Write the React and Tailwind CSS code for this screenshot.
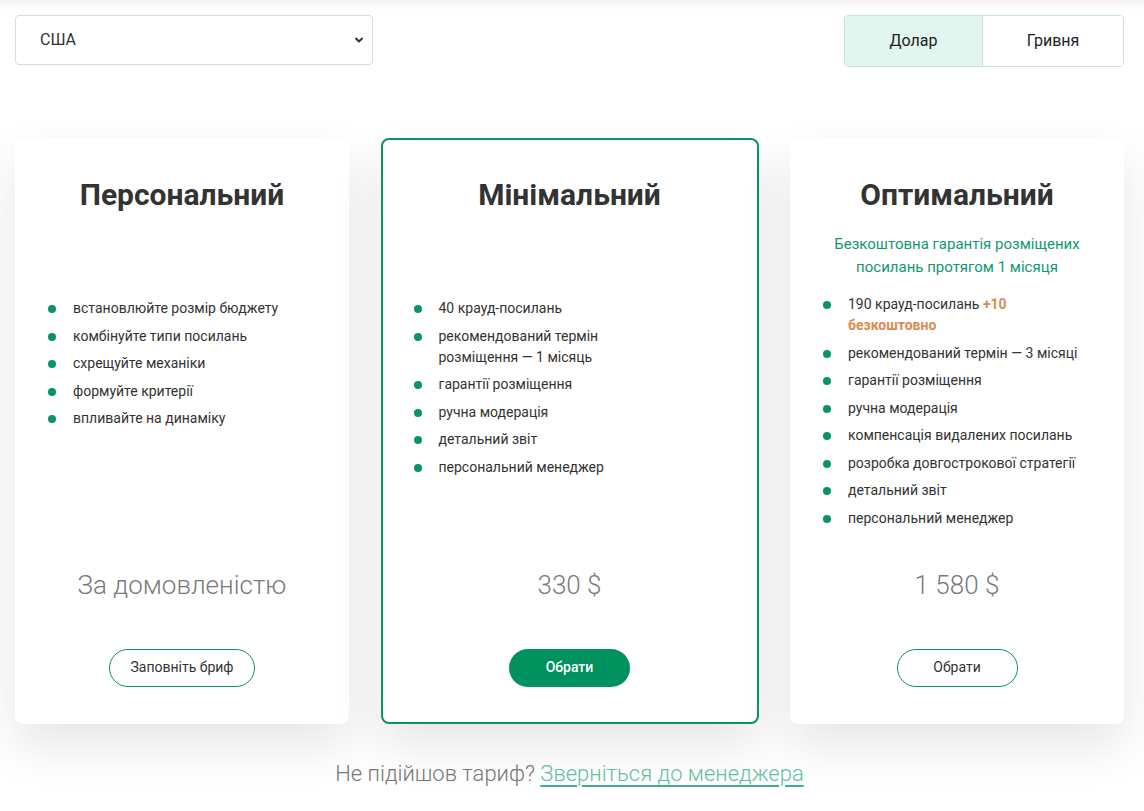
import { ChevronDown } from 'lucide-react';

const plans = [
  {
    title: 'Персональний',
    features: [
      'встановлюйте розмір бюджету',
      'комбінуйте типи посилань',
      'схрещуйте механіки',
      'формуйте критерії',
      'впливайте на динаміку',
    ],
    price: 'За домовленістю',
    action: 'Заповніть бриф',
  },
  {
    title: 'Мінімальний',
    featured: true,
    features: [
      '40 крауд-посилань',
      'рекомендований термін розміщення — 1 місяць',
      'гарантії розміщення',
      'ручна модерація',
      'детальний звіт',
      'персональний менеджер',
    ],
    price: '330 $',
    action: 'Обрати',
  },
  {
    title: 'Оптимальний',
    note: 'Безкоштовна гарантія розміщених посилань протягом 1 місяця',
    features: [
      <>
        190 крауд-посилань <span className="font-bold text-[#dc8a4f]">+10</span>{' '}
        <span className="font-bold text-[#dc8a4f]">безкоштовно</span>
      </>,
      'рекомендований термін — 3 місяці',
      'гарантії розміщення',
      'ручна модерація',
      'компенсація видалених посилань',
      'розробка довгострокової стратегії',
      'детальний звіт',
      'персональний менеджер',
    ],
    price: '1 580 $',
    action: 'Обрати',
  },
];

function PlanCard({ plan }) {
  return (
    <div
      className={`flex flex-col rounded-lg bg-white shadow-[0_22px_50px_rgba(0,0,0,0.1)] ${
        plan.featured
          ? 'border-2 border-[#0a9461] pt-[37px] pb-[35px]'
          : 'pt-[39px] pb-[37px]'
      }`}
    >
      <div className={plan.note ? 'mb-[15.5px]' : 'h-[121px]'}>
        <h2 className="text-center text-[30px] leading-[36px] font-bold text-[#333]">
          {plan.title}
        </h2>
        {plan.note && (
          <p className="mx-auto mt-[19.5px] max-w-[280px] text-center text-[15px] leading-[23px] text-[#12986f]">
            {plan.note}
          </p>
        )}
      </div>

      <div className="flex-1">
        <ul
          className={`flex max-w-[258px] flex-col gap-[6.5px] ${
            plan.featured ? 'ml-[31px]' : 'ml-[33px]'
          }`}
        >
          {plan.features.map((feature, i) => (
            <li key={i} className="flex items-start text-[14px] leading-[21px] text-[#333]">
              <span className="mt-[7px] mr-[17px] h-[8px] w-[8px] shrink-0 rounded-full bg-[#0a9461]" />
              <span>{feature}</span>
            </li>
          ))}
        </ul>
      </div>

      <p className="mt-[40px] text-center text-[26px] leading-[32px] font-light text-[#7a7a7a]">
        {plan.price}
      </p>

      <div className="mt-[48px] flex justify-center">
        {plan.featured ? (
          <button className="h-[38px] w-[121px] rounded-full bg-[#00925e] text-[14px] font-medium text-white">
            {plan.action}
          </button>
        ) : (
          <button className="h-[38px] min-w-[121px] rounded-full border border-[#0a9461] px-[20px] text-[14px] text-[#333]">
            {plan.action}
          </button>
        )}
      </div>
    </div>
  );
}

export default function App() {
  return (
    <div
      className="min-h-[811px] bg-white pl-[15px] pr-[20px] pt-[15px] shadow-[inset_0_10px_12px_-8px_rgba(0,0,0,0.07)]"
      style={{ fontFamily: 'Roboto, "Noto Sans", sans-serif' }}
    >
      <div className="flex items-start justify-between">
        <div className="relative w-[358px]">
          <select className="h-[50px] w-full appearance-none rounded border border-[#dadada] bg-white pl-[24px] text-[16px] text-[#333] outline-none">
            <option>США</option>
          </select>
          <ChevronDown
            className="pointer-events-none absolute top-1/2 right-[8px] -translate-y-1/2 text-[#333]"
            size={12}
            strokeWidth={4}
          />
        </div>

        <div className="flex h-[52px] overflow-hidden rounded border border-[#c6e3d9]">
          <button className="w-[137px] bg-[#e0f6ee] text-[16px] text-[#222]">Долар</button>
          <button className="w-[141px] border-l border-[#c6e3d9] bg-white text-[16px] text-[#222]">
            Гривня
          </button>
        </div>
      </div>

      <div className="mt-[71px] grid grid-cols-[334px_378px_334px] gap-x-[31.5px]">
        {plans.map((plan) => (
          <PlanCard key={plan.title} plan={plan} />
        ))}
      </div>

      <p className="mt-[37px] text-center text-[22px] leading-[26px] font-light text-[#777]">
        Не підійшов тариф?{' '}
        <a href="#" className="text-[#62bfa1] underline decoration-[#3fae88] underline-offset-[4px]">
          Зверніться до менеджера
        </a>
      </p>
    </div>
  );
}
